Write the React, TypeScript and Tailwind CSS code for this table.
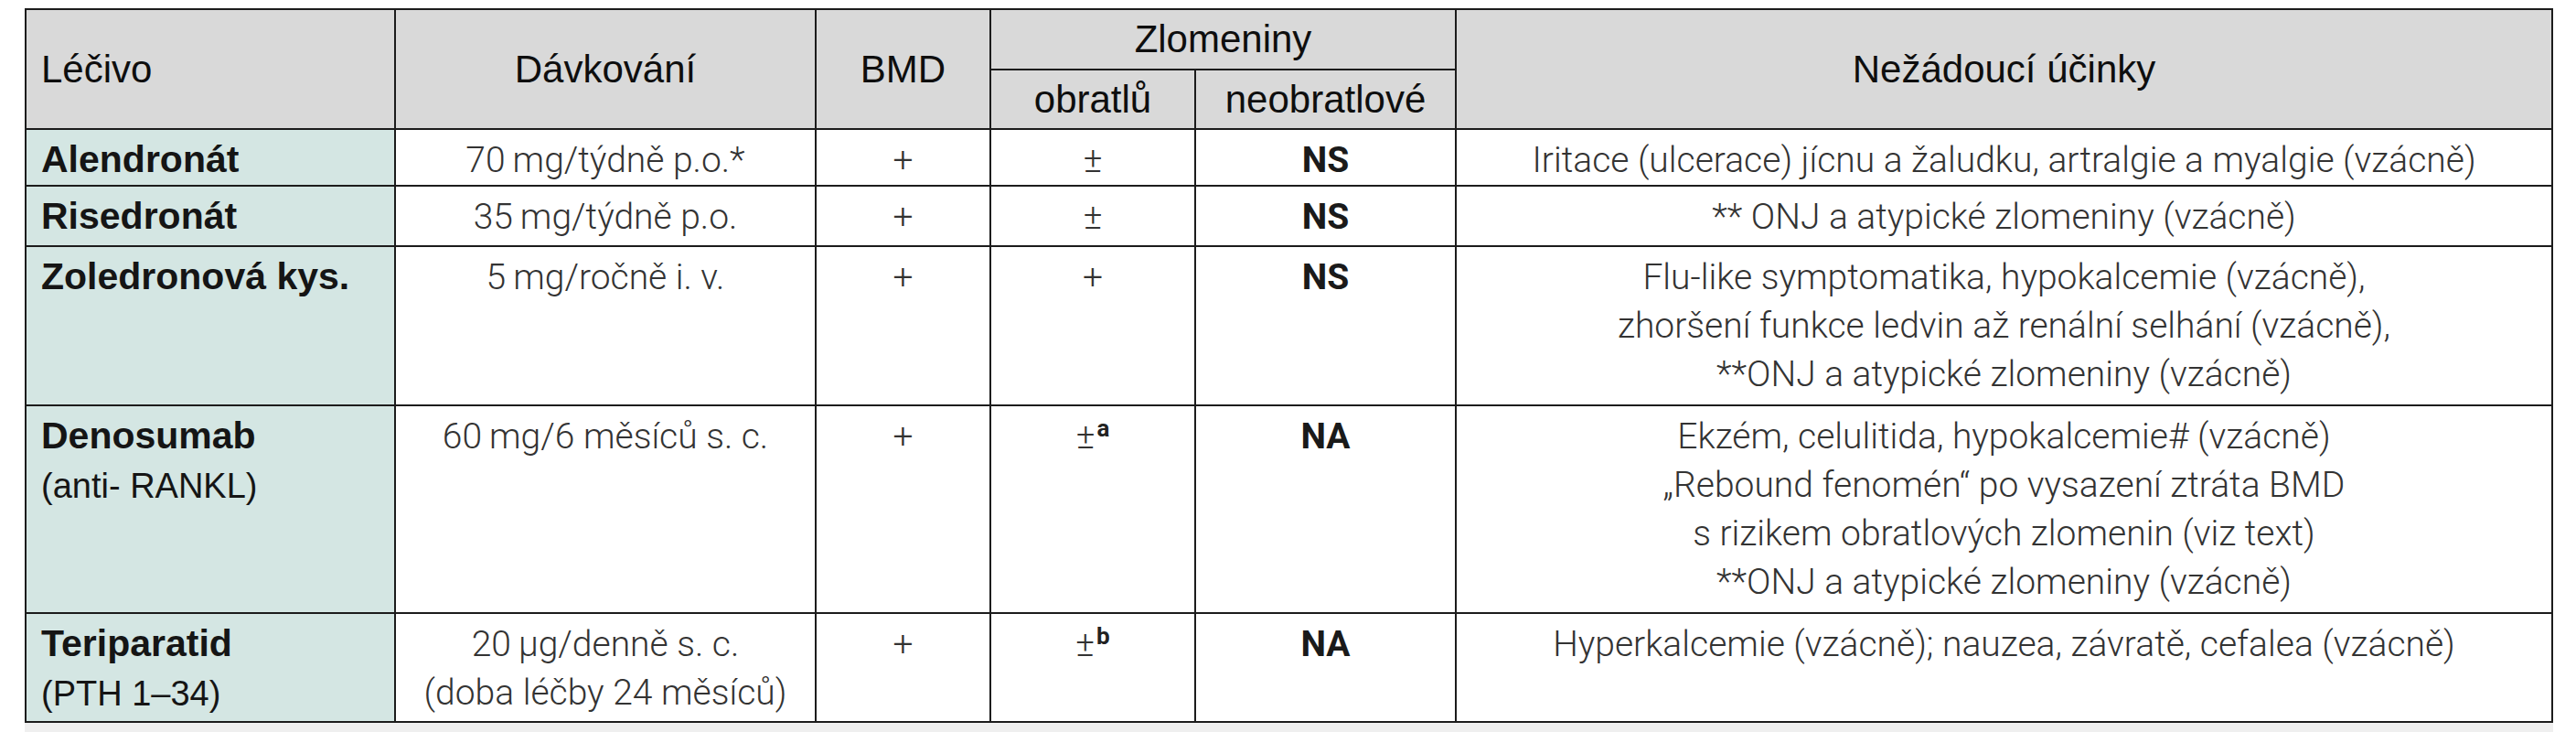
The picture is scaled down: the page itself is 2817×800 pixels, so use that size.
type Row = {
  name: string;
  sub?: string;
  dose: string[];
  bmd: string;
  vert: string;
  sup?: string;
  nonVert: string;
  effects: string[];
  h: string;
};

const rows: Row[] = [
  {
    name: "Alendronát",
    dose: ["70\u2009mg/týdně p.o.*"],
    bmd: "+",
    vert: "±",
    nonVert: "NS",
    effects: ["Iritace (ulcerace) jícnu a žaludku, artralgie a myalgie (vzácně)"],
    h: "h-[62px]",
  },
  {
    name: "Risedronát",
    dose: ["35\u2009mg/týdně p.o."],
    bmd: "+",
    vert: "±",
    nonVert: "NS",
    effects: ["** ONJ a atypické zlomeniny (vzácně)"],
    h: "h-[66px]",
  },
  {
    name: "Zoledronová kys.",
    dose: ["5\u2009mg/ročně i. v."],
    bmd: "+",
    vert: "+",
    nonVert: "NS",
    effects: [
      "Flu-like symptomatika, hypokalcemie (vzácně),",
      "zhoršení funkce ledvin až renální selhání (vzácně),",
      "**ONJ a atypické zlomeniny (vzácně)",
    ],
    h: "h-[174px]",
  },
  {
    name: "Denosumab",
    sub: "(anti- RANKL)",
    dose: ["60\u2009mg/6 měsíců s. c."],
    bmd: "+",
    vert: "±",
    sup: "a",
    nonVert: "NA",
    effects: [
      "Ekzém, celulitida, hypokalcemie# (vzácně)",
      "„Rebound fenomén“ po vysazení ztráta BMD",
      "s rizikem obratlových zlomenin (viz text)",
      "**ONJ a atypické zlomeniny (vzácně)",
    ],
    h: "h-[227px]",
  },
  {
    name: "Teriparatid",
    sub: "(PTH 1–34)",
    dose: ["20\u2009µg/denně s. c.", "(doba léčby 24 měsíců)"],
    bmd: "+",
    vert: "±",
    sup: "b",
    nonVert: "NA",
    effects: ["Hyperkalcemie (vzácně); nauzea, závratě, cefalea (vzácně)"],
    h: "h-[119px]",
  },
];

const line = "border-2 border-[#1c1c1c]";
const head = `${line} bg-[#d9d9d9] font-['Liberation_Sans',Arial,sans-serif] font-normal text-[42px] leading-none text-[#0e0e0e] text-center align-middle`;
const base = `${line} align-top text-center pt-[7px] font-['Roboto','Liberation_Sans',Arial,sans-serif] text-[39px] leading-[53px]`;
const cell = `${base} font-light text-[#333]`;
const strong = `${base} font-bold text-[#1a1a1a]`;

export default function App() {
  return (
    <div className="min-h-screen bg-white pl-[27px] pt-[9px]">
      <table className="w-[2765px] table-fixed border-collapse">
        <colgroup>
          <col className="w-[404px]" />
          <col className="w-[460px]" />
          <col className="w-[191px]" />
          <col className="w-[224px]" />
          <col className="w-[285px]" />
          <col className="w-[1199px]" />
        </colgroup>
        <thead>
          <tr className="h-[66px]">
            <th rowSpan={2} className={`${head} pl-4 text-left`}>
              Léčivo
            </th>
            <th rowSpan={2} className={head}>
              Dávkování
            </th>
            <th rowSpan={2} className={head}>
              BMD
            </th>
            <th colSpan={2} className={head}>
              Zlomeniny
            </th>
            <th rowSpan={2} className={head}>
              Nežádoucí účinky
            </th>
          </tr>
          <tr className="h-[65px]">
            <th className={head}>obratlů</th>
            <th className={head}>neobratlové</th>
          </tr>
        </thead>
        <tbody>
          {rows.map((r) => (
            <tr key={r.name} className={r.h}>
              <td className={`${line} bg-[#d4e6e3] pl-4 pt-[6px] align-top font-['Liberation_Sans',Arial,sans-serif] text-[#151515]`}>
                <div className="text-[41px] font-bold leading-[53px]">{r.name}</div>
                {r.sub && <div className="text-[38px] leading-[57px]">{r.sub}</div>}
              </td>
              <td className={cell}>
                {r.dose.map((d) => (
                  <div key={d}>{d}</div>
                ))}
              </td>
              <td className={cell}>{r.bmd}</td>
              <td className={cell}>
                {r.vert}
                {r.sup && <sup className="ml-[2px] text-[26px] font-bold text-[#222]">{r.sup}</sup>}
              </td>
              <td className={strong}>{r.nonVert}</td>
              <td className={cell}>
                {r.effects.map((e) => (
                  <div key={e}>{e}</div>
                ))}
              </td>
            </tr>
          ))}
        </tbody>
      </table>
      <div className="h-[10px] w-[2765px] bg-[#efefef]" />
    </div>
  );
}
